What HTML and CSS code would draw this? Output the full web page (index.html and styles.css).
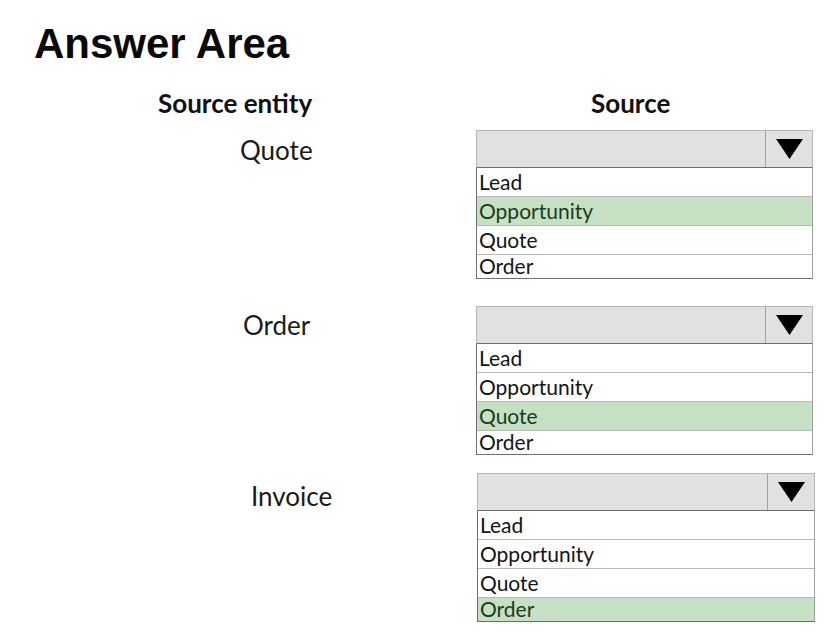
FILE: index.html
```html
<!DOCTYPE html>
<html>
<head>
<meta charset="utf-8">
<link rel="stylesheet" href="styles.css">
</head>
<body>
<div class="page">
  <h1 class="title">Answer Area</h1>
  <div class="heads">
    <div class="head head-entity">Source entity</div>
    <div class="head head-source">Source</div>
  </div>

  <div class="row row-quote">
    <div class="label label-quote">Quote</div>
    <div class="dropdown">
      <div class="dd-head"><div class="dd-field"></div><div class="dd-btn"><svg width="27" height="20" viewBox="0 0 27 20"><polygon points="0,0 27,0 13.5,20" fill="#000"/></svg></div></div>
      <div class="dd-list">
        <div class="opt">Lead</div>
        <div class="opt sel">Opportunity</div>
        <div class="opt">Quote</div>
        <div class="opt last">Order</div>
      </div>
    </div>
  </div>

  <div class="row row-order">
    <div class="label label-order">Order</div>
    <div class="dropdown">
      <div class="dd-head"><div class="dd-field"></div><div class="dd-btn"><svg width="27" height="20" viewBox="0 0 27 20"><polygon points="0,0 27,0 13.5,20" fill="#000"/></svg></div></div>
      <div class="dd-list">
        <div class="opt">Lead</div>
        <div class="opt">Opportunity</div>
        <div class="opt sel">Quote</div>
        <div class="opt last">Order</div>
      </div>
    </div>
  </div>

  <div class="row row-invoice">
    <div class="label label-invoice">Invoice</div>
    <div class="dropdown dropdown-wide">
      <div class="dd-head"><div class="dd-field"></div><div class="dd-btn"><svg width="27" height="20" viewBox="0 0 27 20"><polygon points="0,0 27,0 13.5,20" fill="#000"/></svg></div></div>
      <div class="dd-list">
        <div class="opt">Lead</div>
        <div class="opt">Opportunity</div>
        <div class="opt">Quote</div>
        <div class="opt sel last">Order</div>
      </div>
    </div>
  </div>
</div>
</body>
</html>
```

FILE: styles.css
```css
html, body {
  margin: 0;
  padding: 0;
  background: #ffffff;
}
.page {
  width: 840px;
  height: 638px;
  overflow: hidden;
  font-family: Lato, "Open Sans", sans-serif;
  color: #111;
}
.title {
  margin: 0;
  padding: 21px 0 0 34px;
  font-family: "Liberation Sans", Arial, sans-serif;
  font-weight: bold;
  font-size: 42px;
  line-height: 46px;
  color: #0a0a0a;
}
.heads {
  display: flex;
  margin-top: 21px;
  height: 30px;
}
.head {
  font-weight: bold;
  font-size: 26px;
  line-height: 30px;
  color: #111;
}
.head-entity {
  padding-left: 158px;
  width: 591px;
  box-sizing: border-box;
}
.row {
  display: flex;
  align-items: flex-start;
}
.row-quote { margin-top: 12px; }
.row-order { margin-top: 27px; }
.row-invoice { margin-top: 18px; }
.label {
  width: 476px;
  box-sizing: border-box;
  font-size: 26px;
  line-height: 30px;
  color: #1a1a1a;
  padding-top: 5px;
}
.label-quote { padding-left: 240px; }
.label-order { padding-left: 243px; padding-top: 4px; }
.label-invoice { padding-left: 251px; width: 477px; padding-top: 8px; }
.dropdown {
  width: 337px;
  display: flex;
  flex-direction: column;
}
.dropdown-wide { width: 338px; }
.dd-head {
  display: flex;
  height: 38px;
  box-sizing: border-box;
  background: #e1e1e1;
  border: 1px solid #b4b4b4;
  border-bottom: 1px solid #6e6e6e;
}
.dd-field {
  flex: 1;
  border-right: 1px solid #a0a0a0;
}
.dd-btn {
  width: 45px;
  display: flex;
  align-items: center;
  justify-content: center;
  padding-left: 1px;
}
.dd-list {
  border-left: 1px solid #6e6e6e;
  border-right: 1px solid #a0a0a0;
  border-bottom: 1px solid #6e6e6e;
}
.opt {
  height: 29px;
  box-sizing: border-box;
  border-bottom: 1px solid #b8b8b8;
  font-size: 21px;
  line-height: 27px;
  padding-left: 2px;
  color: #141414;
  background: #ffffff;
}
.opt.sel {
  background: #c5e0c3;
  color: #1d3b1d;
}
.opt.last {
  height: 23px;
  line-height: 22px;
  border-bottom: none;
}
```
